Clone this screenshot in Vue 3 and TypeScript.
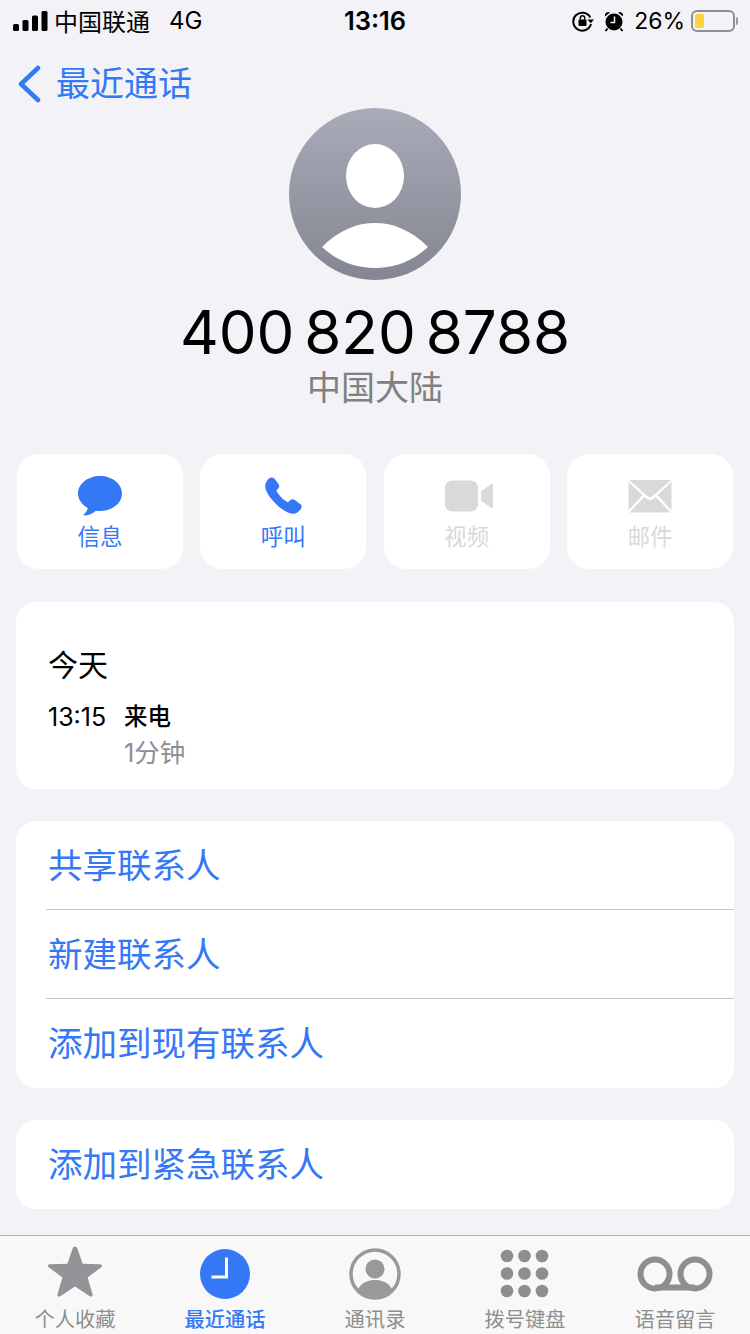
<script setup lang="ts">
const actions = [
  { label: '信息', kind: 'msg', on: true },
  { label: '呼叫', kind: 'call', on: true },
  { label: '视频', kind: 'video', on: false },
  { label: '邮件', kind: 'mail', on: false },
]
const links = ['共享联系人', '新建联系人', '添加到现有联系人']
const tabs = [
  { label: '个人收藏', kind: 'star', on: false },
  { label: '最近通话', kind: 'clock', on: true },
  { label: '通讯录', kind: 'person', on: false },
  { label: '拨号键盘', kind: 'pad', on: false },
  { label: '语音留言', kind: 'vm', on: false },
]
const dots = [0, 1, 2].flatMap((r) => [0, 1, 2].map((c) => ({ cx: 7 + c * 17.5, cy: 7 + r * 17.5 })))
</script>

<template>
  <div class="page">
    <div class="status">
      <div class="st-left">
        <svg width="36" height="22" viewBox="0 0 36 22" class="signal">
          <rect x="0" y="14" width="6" height="7" rx="1.5" />
          <rect x="9.500" y="10" width="6" height="11" rx="1.5" />
          <rect x="19" y="5.500" width="6" height="15.500" rx="1.5" />
          <rect x="28.500" y="1" width="6" height="20" rx="1.500" />
        </svg>
        <span class="carrier">中国联通</span>
        <span class="net">4G</span>
      </div>
      <div class="st-time">13:16</div>
      <div class="st-right">
        <svg width="22" height="22" viewBox="0 0 22 22" class="lock">
          <path d="M18.300 7.500A9 9 0 1 0 19 14" fill="none" stroke="#000" stroke-width="2" />
          <path d="M15.500 9.500h6.500l-3.200 3.700z" fill="#000" />
          <rect x="6.500" y="9.500" width="8" height="6.500" rx="1" fill="#000" />
          <path d="M8.300 9.500V8a2.200 2.200 0 0 1 4.400 0v1.500" fill="none" stroke="#000" stroke-width="1.500" />
        </svg>
        <svg width="20" height="22" viewBox="0 0 20 22" class="alarm">
          <circle cx="10" cy="12" r="8.500" fill="#000" />
          <path d="M1 6.500a3.500 3.500 0 0 1 5-4zM19 6.500a3.500 3.500 0 0 0-5-4z" fill="#000" />
          <path d="M3.500 18.500l-2 2.500M16.500 18.500l2 2.500" stroke="#000" stroke-width="2" />
          <path d="M10.500 6.500v6h-4" fill="none" stroke="#f2f2f7" stroke-width="1.500" />
        </svg>
        <span class="pct">26%</span>
        <div class="batt"><div class="batt-fill"></div></div>
        <div class="batt-cap"></div>
      </div>
    </div>

    <div class="nav">
      <svg width="24" height="38" viewBox="0 0 24 38">
        <path d="M21 3L4 19l17 16" fill="none" stroke="#3478f6" stroke-width="4.500" stroke-linecap="round" stroke-linejoin="round" />
      </svg>
      <span class="nav-text">最近通话</span>
    </div>

    <div class="head">
      <svg class="avatar" width="172" height="172" viewBox="0 0 172 172">
        <defs>
          <linearGradient id="av" x1="0" y1="0" x2="0" y2="1">
            <stop offset="0" stop-color="#a8abb8" />
            <stop offset="1" stop-color="#848791" />
          </linearGradient>
        </defs>
        <circle cx="86" cy="86" r="86" fill="url(#av)" />
        <ellipse cx="86" cy="68" rx="29" ry="32" fill="#fff" />
        <path d="M33 139C50 122 68 115 86 115C104 115 122 122 139 139C124 153 106 160 86 160C66 160 48 153 33 139Z" fill="#fff" />
      </svg>
      <div class="number">400 820 8788</div>
      <div class="region">中国大陆</div>
    </div>

    <div class="actions">
      <div v-for="a in actions" :key="a.label" class="action" :class="{ off: !a.on }">
        <div class="action-icon">
          <svg v-if="a.kind === 'msg'" width="46" height="42" viewBox="0 0 46 42">
            <path d="M23 1C10.800 1 1 9 1 18.500C1 24.500 5 29.800 10.800 33C10.500 35.500 8.800 38 6.800 39.300C6.300 39.700 6.500 40.500 7.300 40.500C11.500 40.500 15.500 38.500 18.800 35.700C20.200 35.900 21.600 36 23 36C35.200 36 45 28 45 18.500C45 9 35.200 1 23 1Z" fill="#3478f6" />
          </svg>
          <svg v-else-if="a.kind === 'call'" width="40" height="40" viewBox="0 0 40 40">
            <path d="M6 2.500C7.500 1 10 1 11.300 2.600L15.500 8C16.500 9.300 16.400 11 15.400 12.200L13.400 14.500C14.800 18.500 21 24.800 25 26.200L27.500 24C28.800 23 30.500 23 31.800 24L37.500 28.300C39 29.500 39 31.800 37.700 33.300C35.500 36 33 38 29.500 37.800C20 37 2.500 20 2.200 10.500C2 7.200 3.700 4.700 6 2.500Z" fill="#3478f6" />
          </svg>
          <svg v-else-if="a.kind === 'video'" class="video" width="50" height="34" viewBox="0 0 50 34">
            <rect x="1" y="1.500" width="33" height="31" rx="7" fill="#d9d9d9" />
            <path d="M37 12.500L46.500 5.500C48 4.500 49 5 49 7V27C49 29 48 29.500 46.500 28.500L37 21.500C37 21.500 37 12.500 37 12.500Z" fill="#d9d9d9" />
          </svg>
          <svg v-else width="44" height="34" viewBox="0 0 44 34">
            <path d="M1 1h42L24 17.500c-1.200 1-2.800 1-4 0z" fill="#d9d9d9" />
            <path d="M0.500 3v28.500L14.500 16zM43.500 3v28.500L29.500 16z" fill="#d9d9d9" />
            <path d="M1.500 33.500h41L27.800 18l-2.500 2c-2 1.600-4.600 1.600-6.600 0l-2.500-2z" fill="#d9d9d9" />
          </svg>
        </div>
        <span class="action-label">{{ a.label }}</span>
      </div>
    </div>

    <div class="card log">
      <div class="log-day">今天</div>
      <div class="log-row">
        <span class="log-time">13:15</span>
        <div class="log-info">
          <div class="log-type">来电</div>
          <div class="log-dur">1分钟</div>
        </div>
      </div>
    </div>

    <div class="card list">
      <div v-for="l in links" :key="l" class="link">{{ l }}</div>
    </div>

    <div class="card list">
      <div class="link">添加到紧急联系人</div>
    </div>

    <div class="tabbar">
      <div v-for="t in tabs" :key="t.label" class="tab" :class="{ on: t.on }">
        <div class="tab-icon">
          <svg v-if="t.kind === 'star'" class="star" width="56" height="52" viewBox="0 0 56 52">
            <path d="M28 0.500C29.200 0.500 30 1.300 30.500 2.700L35.600 17.800L52.800 18.200C54.800 18.200 55.800 19.800 54.300 21.200L40.600 31.400L45.500 48.200C46 50 44.500 51.300 42.800 50.200L28 40.500L13.200 50.200C11.500 51.300 10 50 10.500 48.200L15.400 31.400L1.700 21.200C0.200 19.800 1.200 18.200 3.200 18.200L20.400 17.800L25.500 2.700C26 1.300 26.800 0.500 28 0.500Z" fill="#929497" />
          </svg>
          <svg v-else-if="t.kind === 'clock'" width="50" height="50" viewBox="0 0 50 50">
            <circle cx="25" cy="25" r="25" fill="#3478f6" />
            <path d="M26.500 8.500V28H11.500" fill="none" stroke="#fff" stroke-width="3" />
          </svg>
          <svg v-else-if="t.kind === 'person'" width="52" height="52" viewBox="0 0 52 52">
            <circle cx="26" cy="26" r="24" fill="none" stroke="#999" stroke-width="3.500" />
            <circle cx="26" cy="21" r="9.500" fill="#999" />
            <path d="M9 41C13 34.500 19 32 26 32C33 32 39 34.500 43 41C39 46 33 49 26 49C19 49 13 46 9 41Z" fill="#999" />
          </svg>
          <svg v-else-if="t.kind === 'pad'" width="50" height="50" viewBox="0 0 50 50">
            <circle v-for="d in dots" :key="d.cx + '-' + d.cy" :cx="d.cx" :cy="d.cy" r="6.300" fill="#8e8e8e" />
          </svg>
          <svg v-else width="76" height="36" viewBox="0 0 76 36">
            <circle cx="18" cy="18" r="14.500" fill="none" stroke="#8e8e8e" stroke-width="6" />
            <circle cx="58" cy="18" r="14.500" fill="none" stroke="#8e8e8e" stroke-width="6" />
            <path d="M18 31.500H58" stroke="#8e8e8e" stroke-width="6" />
          </svg>
        </div>
        <span class="tab-label">{{ t.label }}</span>
      </div>
    </div>
  </div>
</template>

<style>
html, body { margin: 0; background: #f2f2f7; }
</style>

<style scoped>
.page {
  width: 750px;
  height: 1334px;
  overflow: hidden;
  background: #f2f2f7;
  font-family: Inter, "Noto Sans CJK SC", sans-serif;
  color: #000;
  display: flex;
  flex-direction: column;
}
.status {
  height: 41px;
  flex: none;
  display: grid;
  grid-template-columns: 1fr auto 1fr;
  align-items: center;
  font-size: 24px;
}
.st-left { display: flex; align-items: center; padding-left: 13px; }
.signal { fill: #000; margin-right: 5px; }
.carrier { font-size: 24px; }
.net { margin-left: 19px; font-size: 24px; }
.st-time { font-weight: 600; font-size: 25.500px; }
.st-right { display: flex; align-items: center; justify-content: flex-end; padding-right: 12px; }
.lock { margin-right: 10px; }
.alarm { margin-right: 10px; }
.pct { font-size: 23px; margin-right: 6px; }
.batt {
  width: 44px;
  height: 22px;
  box-sizing: border-box;
  border: 2px solid #8e8e93;
  border-radius: 6px;
  padding: 2px;
}
.batt-fill { width: 9px; height: 100%; background: #ffd23f; border-radius: 2px; }
.batt-cap { width: 2px; height: 8px; margin-left: 1px; background: #9a9a9e; border-radius: 0 2px 2px 0; }
.nav {
  flex: none;
  height: 49px;
  padding: 18px 0 0 17px;
  display: flex;
  align-items: center;
  gap: 15px;
  color: #3478f6;
  font-size: 34px;
}
.nav-text { margin-bottom: 5px; }
.head { flex: none; display: flex; flex-direction: column; align-items: center; }
.avatar { display: block; }
.number { font-size: 60px; line-height: 72px; margin-top: 16px; word-spacing: -7px; }
.region { font-size: 34px; line-height: 42px; color: #808080; margin-top: -1px; }
.actions {
  flex: none;
  margin-top: 45px;
  padding: 0 17px;
  display: grid;
  grid-template-columns: repeat(4, 166px);
  justify-content: space-between;
}
.action {
  height: 115px;
  background: #fff;
  border-radius: 22px;
  display: flex;
  flex-direction: column;
  align-items: center;
  color: #3478f6;
  font-size: 22.500px;
}
.action.off { color: #d9d9d9; }
.action-icon {
  height: 44px;
  margin-top: 20px;
  display: flex;
  align-items: center;
  justify-content: center;
}
.video { transform: translateX(2px); }
.action-label { line-height: 30px; margin-top: 4px; }
.card {
  flex: none;
  margin: 0 16px;
  background: #fff;
  border-radius: 20px;
}
.log { margin-top: 33px; height: 187px; box-sizing: border-box; padding: 44px 32px 0; }
.log-day { font-size: 30px; line-height: 38px; }
.log-row { display: flex; margin-top: 18px; }
.log-time { width: 76px; font-size: 25px; line-height: 30px; }
.log-type { font-size: 23.500px; line-height: 30px; font-weight: 500; }
.log-dur { font-size: 25.500px; line-height: 30px; color: #8e8e93; margin-top: 6px; }
.list { margin-top: 32px; }
.link {
  height: 89px;
  margin-left: 30px;
  padding: 0 0 5px 2px;
  box-sizing: border-box;
  display: flex;
  align-items: center;
  font-size: 34.500px;
  color: #3478f6;
  border-top: 1px solid #c6c6c8;
}
.link:first-child { border-top: none; }
.link:first-child:not(:last-child) { height: 88px; }
.link:last-child:not(:first-child) { height: 90px; }
.tabbar {
  position: absolute;
  left: 0;
  top: 1235px;
  width: 750px;
  height: 99px;
  box-sizing: border-box;
  background: #f8f8f9;
  border-top: 1px solid #b2b2b2;
  display: grid;
  grid-template-columns: repeat(5, 150px);
}
.tab {
  display: flex;
  flex-direction: column;
  align-items: center;
  color: #8e8e8e;
  font-size: 20.300px;
}
.tab.on { color: #3478f6; font-weight: 500; }
.tab-icon {
  height: 54px;
  margin-top: 11px;
  display: flex;
  align-items: center;
  justify-content: center;
}
.star { transform: translateY(-2px); }
.tab-label { line-height: 26px; margin-top: 6px; }
</style>
